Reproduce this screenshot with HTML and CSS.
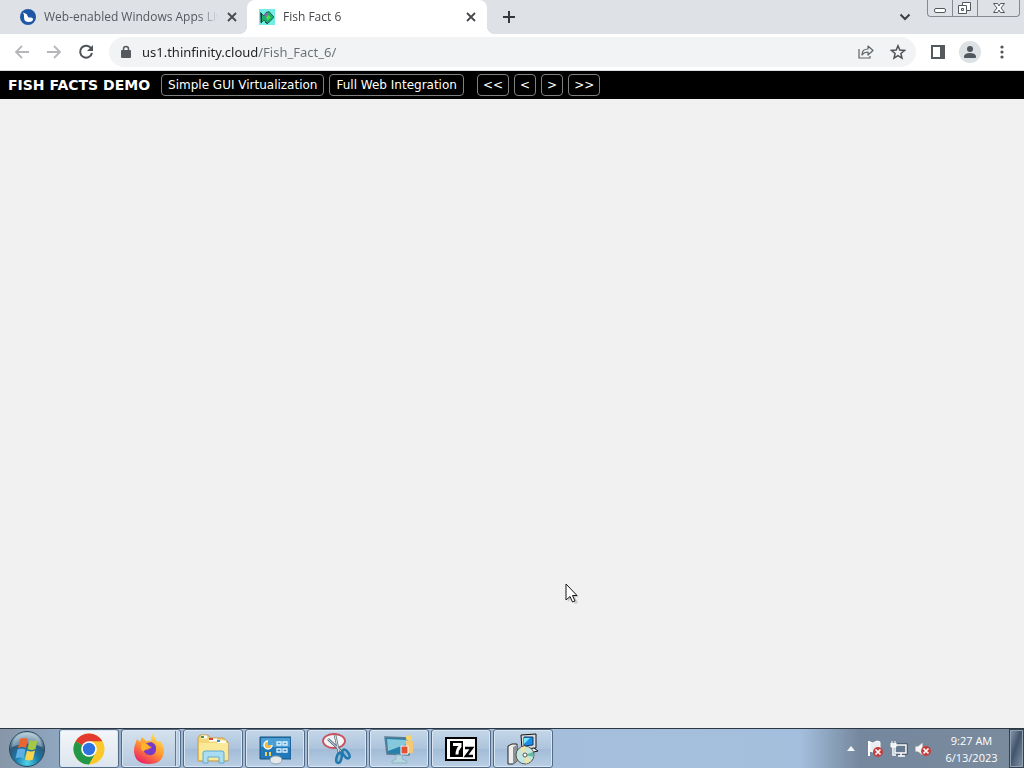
FILE: index.html
```
<!DOCTYPE html>
<html lang="en">
<head>
<meta charset="utf-8">
<title>Fish Fact 6</title>
<link rel="stylesheet" href="styles.css">
</head>
<body>
<header class="tabstrip">
  <div class="tab">
    <svg class="favicon" viewBox="0 0 16 16"><circle cx="8" cy="8" r="8" fill="#1d58a7"/><path d="M3 3.500L6.500 5l2 3.500h2.500q2.500.5 2 2.500-1 2-4 2-5 0-5-4.500V6z" fill="#fff"/></svg>
    <span class="tab-title">Web-enabled Windows Apps Live</span>
    <button class="tab-close" aria-label="Close tab"><svg viewBox="0 0 10 10"><path d="M1 1l8 8M9 1L1 9"/></svg></button>
  </div>
  <div class="tab tab-active">
    <svg class="favicon" viewBox="0 0 16 16"><path fill="#72eee5" d="M0 0h16v16H0z"/><path d="M1.500 3.500L5 7l2-3.500 3-1L13 6l2 2-4 4.500-3 2L5 11l-3 3z" fill="#1fae72" stroke="#174f42" stroke-width=".8"/><path d="M5 5l3-1 1 3-2 2z" fill="#9269b1"/><path d="M9 6l3 2-3 3-2-2z" fill="#48e349"/><path d="M2.500 4v10M6 13l3 2" stroke="#153943"/></svg>
    <span class="tab-title">Fish Fact 6</span>
    <button class="tab-close" aria-label="Close tab"><svg viewBox="0 0 10 10"><path d="M1 1l8 8M9 1L1 9"/></svg></button>
  </div>
  <button class="new-tab" aria-label="New tab"><svg viewBox="0 0 12 12"><path d="M6 0v12M0 6h12"/></svg></button>
  <button class="tab-search" aria-label="Search tabs"><svg viewBox="0 0 12 8"><path d="M1.500 1.500L6 6l4.500-4.500"/></svg></button>
  <div class="window-controls">
    <button aria-label="Minimize"><svg viewBox="0 0 24 16"><rect x="6.500" y="8.500" width="11" height="4" rx="1.500" fill="#fff" stroke="#54585e"/></svg></button>
    <button aria-label="Restore"><svg viewBox="0 0 24 16"><path d="M9.500 2.500h8v8h-8z" fill="#fff" stroke="#54585e"/><path d="M5.500 5.500h8v8h-8z" fill="#fff" stroke="#54585e"/><path d="M8.500 8.500h2v2h-2z" fill="#dee1e6" stroke="#54585e"/></svg></button>
    <button class="close-window" aria-label="Close"><svg viewBox="0 0 24 16"><path d="M6.500 3.500h4L12 6l1.500-2.500h4L14 8l3.500 4.500h-4L12 10l-1.500 2.500h-4L10 8z" fill="#fff" stroke="#54585e"/></svg></button>
  </div>
</header>
<nav class="toolbar" aria-label="Browser toolbar">
  <button class="tool" aria-label="Back"><svg viewBox="0 0 16 16"><path d="M15 8H2M8 2L2 8l6 6" fill="none" stroke="#b5b7ba" stroke-width="1.800"/></svg></button>
  <button class="tool" aria-label="Forward"><svg viewBox="0 0 16 16"><path d="M1 8h13M8 2l6 6-6 6" fill="none" stroke="#b5b7ba" stroke-width="1.800"/></svg></button>
  <button class="tool" aria-label="Reload"><svg viewBox="0 0 16 16"><path d="M13.300 4.600A6 6 0 1 0 14 9" fill="none" stroke="#4f5358" stroke-width="2"/><path d="M15 1v6H9z" fill="#4f5358"/></svg></button>
  <div class="omnibox">
    <svg class="lock" viewBox="0 0 10 14"><path d="M2.500 6V4a2.500 2.500 0 0 1 5 0v2" fill="none" stroke="#55585d" stroke-width="1.500"/><rect y="5" width="10" height="8" rx="1" fill="#55585d"/></svg>
    <input class="address" type="text" aria-label="Address" value="us1.thinfinity.cloud/Fish_Fact_6/">
    <button class="tool" aria-label="Share"><svg viewBox="0 0 16 16"><path d="M1 5v9h11v-2" fill="none" stroke="#5f6368" stroke-width="1.200"/><path d="M4 11q0-6 6-6V2l5 4.500-5 4.500V8Q6 8 4 11z" fill="none" stroke="#5f6368" stroke-width="1.200" stroke-linejoin="round"/></svg></button>
    <button class="tool" aria-label="Bookmark"><svg viewBox="0 0 16 16"><path d="M8 1.800l1.800 4.300 4.700.4-3.600 3 1.100 4.600L8 11.700l-4 2.400 1.100-4.600-3.600-3 4.700-.4z" fill="none" stroke="#505459" stroke-width="1.500"/></svg></button>
  </div>
  <button class="tool" aria-label="Side panel"><svg viewBox="0 0 16 16"><path d="M1 1h14v14H1z" fill="#55585d"/><path d="M3 3h7v10H3z" fill="#fff"/></svg></button>
  <button class="tool avatar" aria-label="Profile"><svg viewBox="0 0 16 16"><circle cx="8" cy="5" r="3" fill="#50565d"/><path d="M2 14v-2q1-3 6-3t6 3v2z" fill="#50565d"/></svg></button>
  <button class="tool" aria-label="Menu"><svg viewBox="0 0 16 16" fill="#505459"><circle cx="8" cy="3" r="1.600"/><circle cx="8" cy="8" r="1.600"/><circle cx="8" cy="13" r="1.600"/></svg></button>
</nav>
<div class="demo-bar">
  <h1 class="demo-title">FISH FACTS DEMO</h1>
  <button class="demo-button mode">Simple GUI Virtualization</button>
  <button class="demo-button mode">Full Web Integration</button>
  <div class="pager">
    <button class="demo-button">&lt;&lt;</button>
    <button class="demo-button">&lt;</button>
    <button class="demo-button">&gt;</button>
    <button class="demo-button">&gt;&gt;</button>
  </div>
</div>
<main class="content">
  <svg class="cursor" viewBox="0 0 14 22"><path d="M3 3v16l4-4 3 6 3-1-3-6h4z" fill="#aaa" opacity=".5"/><path d="M1 1v16l4-3.500L7.500 19l2.500-1-2.500-5.500H12z" fill="#fff" stroke="#161616"/></svg>
</main>
<footer class="taskbar">
  <button class="start" aria-label="Start">
    <svg viewBox="0 0 38 38"><defs><radialGradient id="orb" cx=".5" cy=".9" r=".85"><stop offset="0" stop-color="#4fd5ea"/><stop offset=".4" stop-color="#1a7aa9"/><stop offset=".7" stop-color="#2f5a7a"/><stop offset="1" stop-color="#a2bdcb"/></radialGradient></defs><circle cx="19" cy="19" r="17.500" fill="url(#orb)" stroke="#29475c"/><path d="M4 17Q6 3 19 3t15 14Q19 10 4 17z" fill="#d9e9ef" opacity=".4"/><path d="M12 9q4-2 8 0l-2 9q-4-2-8 0z" fill="#e96633"/><path d="M21.500 10q4 2 8 0l-2 9q-4 2-8 0z" fill="#a6c847"/><path d="M9.500 19.500q4-2 8 0l-2 9q-4-2-8 0z" fill="#5dafe4"/><path d="M19 20.500q4 2 8 0l-2 9q-4 2-8 0z" fill="#f8d34c"/></svg>
  </button>
  <div class="apps">
    <button class="app app-current" aria-label="Google Chrome"><svg viewBox="0 0 32 32"><circle cx="16" cy="16" r="15.500" fill="#fbc829"/><path d="M16 16L2.600 8.200A15.500 15.500 0 0 1 29.400 8.200H16z" fill="#e33b2e"/><path d="M2.600 8.200A15.500 15.500 0 0 0 16 31.500l6.500-11.700L16 16z" fill="#229747"/><circle cx="16" cy="16" r="7.800" fill="#fff"/><circle cx="16" cy="16" r="6.200" fill="#2c73e1"/></svg></button>
    <button class="app app-stacked" aria-label="Firefox"><svg viewBox="0 0 32 32"><defs><linearGradient id="flame" x1=".8" y1="0" x2=".2" y2="1"><stop offset="0" stop-color="#ffe64b"/><stop offset=".5" stop-color="#ff9332"/><stop offset="1" stop-color="#e91668"/></linearGradient></defs><path d="M2 12l2-6 3 3 2-5 4 4q3-1 5 0l1-7q4 4 5 8l3-1q4 5 4 10Q30 31 16 31 1 31 1 17q0-3 1-5z" fill="url(#flame)"/><path d="M10 12l4-2 4-1q6 2 5 8-1 6-7 5-5-1-6-6 3 2 6 0l3-2z" fill="#773bca"/><path d="M8 10q5-1 9 4-4 1-5 3-2 3-4-1z" fill="#ffb32b"/></svg></button>
    <button class="app" aria-label="File Explorer"><svg viewBox="0 0 32 32"><path d="M1 5l2-3h8l2 3h13l5 4v19H1z" fill="#f3d77d" stroke="#c99c43"/><path d="M4 4h6M12 7h8M20 9h9" stroke="#fff" stroke-width="3"/><path d="M4 4h3" stroke="#3d9b53" stroke-width="2"/><path d="M12 6h4" stroke="#d54734" stroke-width="2"/><path d="M20 8h3" stroke="#398cd0" stroke-width="2"/><path d="M2 10h29v17H2z" fill="#fbe997"/><path d="M6 30V20q0-2 2-2h17q2 0 2 2v10h-5v-6H11v6z" fill="#a8ddf3" stroke="#62abd0"/></svg></button>
    <button class="app" aria-label="Control Panel"><svg viewBox="0 0 32 32"><path d="M1 4h31v22H1z" fill="#2279b9" stroke="#175580"/><path d="M2 5h29v9H2z" fill="#4b9ed3"/><circle cx="9" cy="12" r="4" fill="#f5b74a" stroke="#f1f8fc" stroke-width="1.500"/><path d="M9 12V7a5 5 0 0 1 5 5z" fill="#43a1d9"/><path d="M18 9h4v3h-4zm6 0h4v3h-4zm-6 7h4v3h-4zm6 0h4v3h-4z" fill="none" stroke="#ddf1fc" stroke-width="1.300"/><path d="M7 19v4M11 19v4" stroke="#f1cf57" stroke-width="2"/><ellipse cx="17" cy="27" rx="6" ry="4" fill="#e5e7e9" stroke="#90a5b5"/></svg></button>
    <button class="app" aria-label="Snipping Tool"><svg viewBox="0 0 32 32"><ellipse cx="13" cy="8" rx="11" ry="7" fill="#f5f4f7" stroke="#c6535e" stroke-width="1.800"/><path d="M7 6l15 14M14 2l4 18" stroke="#596e7d" stroke-width="2.500"/><path d="M7 6l15 14M14 2l4 18" stroke="#dde9ed"/><ellipse cx="18" cy="25" rx="2.500" ry="5" transform="rotate(15 18 25)" fill="#8cb9d5" stroke="#2378ae" stroke-width="2.500"/><ellipse cx="25" cy="21" rx="2.500" ry="5" transform="rotate(-35 25 21)" fill="#8cb9d5" stroke="#2378ae" stroke-width="2.500"/></svg></button>
    <button class="app" aria-label="Remote desktop"><svg viewBox="0 0 32 32"><path d="M2 4l24 1v17L4 21z" fill="#277fac" stroke="#5d7e92" stroke-width="1.500"/><path d="M4 6l20 1v4L5 18z" fill="#85c8dc"/><path d="M13 22h6v4l5 2v2H9v-2l4-2z" fill="#b6d5df" stroke="#8db5c7"/><circle cx="26" cy="5" r="3" fill="#f9d56a"/><path d="M23 8h7v12h-7z" fill="#f5c879"/><path d="M18 13h7v8h-7z" fill="#e14f35" stroke="#fff"/></svg></button>
    <button class="app" aria-label="7-Zip"><svg viewBox="0 0 32 32"><path d="M1 5h30v22H1z" fill="#fff" stroke="#000" stroke-width="2"/><path d="M5 8h13v16H5z"/><path d="M8 11.500h7v2q-3 3-3 8" fill="none" stroke="#fff" stroke-width="3"/><path d="M20 15h7l-6 8h7" fill="none" stroke="#000" stroke-width="2.500"/></svg></button>
    <button class="app" aria-label="Installer"><svg viewBox="0 0 32 32"><path d="M14 2l15-1v14l-14 2z" fill="#ddd" stroke="#111"/><path d="M17 4h9v8l-9 1z" fill="#168ee9" stroke="#163666"/><path d="M17 5h6l-6 6z" fill="#76e5f5"/><path d="M14 17l13-2 4 3-13 3z" fill="#eee" stroke="#111"/><path d="M1 13l4-2h5v17l-4 3H1z" fill="#eee" stroke="#222"/><path d="M6 14v17l4-3V12z" fill="#8d9295"/><circle cx="18" cy="22" r="9" fill="#c5e6df" stroke="#555"/><path d="M18 22l-5-7 5-2zM18 22l6 6-5 3z" fill="#efe4a5"/><path d="M18 22l8-3 1 5z" fill="#65b99d"/><circle cx="18" cy="22" r="2" fill="#fff" stroke="#555"/></svg></button>
  </div>
  <div class="tray">
    <button class="tray-arrow" aria-label="Show hidden icons"><svg viewBox="0 0 8 5"><path d="M0 5l4-5 4 5z" fill="#f5f8fb"/></svg></button>
    <button class="tray-icon" aria-label="Action Center"><svg viewBox="0 0 18 18"><path d="M3 1v15" stroke="#fff" stroke-width="2"/><path d="M4 2q3 2 5 0t5 0v9q-3-2-5 0t-5 0z" fill="#e7edf0" stroke="#fff"/><circle cx="12" cy="12" r="5" fill="#c63d3d"/><path d="M9.500 9.500l5 5m0-5l-5 5" stroke="#fff" stroke-width="1.700"/></svg></button>
    <button class="tray-icon" aria-label="Network"><svg viewBox="0 0 18 18"><path d="M5 5h11v8H5z" fill="#718398" stroke="#303d48" stroke-width="3"/><path d="M5 5h11v8H5zM11 13v3M8 16h7M3 7v8h3" fill="#667a90" stroke="#fff" stroke-width="1.500"/><path d="M1 3v4h5V3M2 1v2M5 1v2" fill="#edf2f4" stroke="#fff"/></svg></button>
    <button class="tray-icon" aria-label="Volume"><svg viewBox="0 0 18 18"><path d="M1 6h3l5-4v14l-5-4H1z" fill="#f5f5f5" stroke="#808c94"/><circle cx="12" cy="11" r="5" fill="#c63d3d"/><path d="M9.500 8.500l5 5m0-5l-5 5" stroke="#fff" stroke-width="1.700"/></svg></button>
    <div class="clock"><span>9:27 AM</span><span>6/13/2023</span></div>
    <button class="show-desktop" aria-label="Show desktop"></button>
  </div>
</footer>
</body>
</html>
```
FILE: styles.css
```
* { box-sizing: border-box; }
body {
  margin: 0;
  min-height: 100vh;
  display: flex;
  flex-direction: column;
  font: 12px/16px "Open Sans", "Noto Sans", sans-serif;
  background: #f1f1f1;
}
button { font: inherit; padding: 0; border: 0; background: none; color: inherit; }
svg { display: block; flex: none; }

.tabstrip { display: flex; height: 34px; background: #dee1e6; color: #55595e; }
.tab {
  display: flex;
  align-items: center;
  flex: 0 1 240px;
  min-width: 0;
  gap: 8px;
  padding: 0 11px 0 12px;
}
.tab:first-child { flex-basis: 247px; padding-left: 20px; padding-right: 10px; }
.tab-active { position: relative; background: #fff; border-radius: 8px 8px 0 0; color: #45494d; }
.tab-active::before, .tab-active::after {
  content: "";
  position: absolute;
  bottom: 0;
  width: 8px;
  height: 8px;
}
.tab-active::before { left: -8px; background: radial-gradient(circle at 0 0, transparent 8px, #fff 8px); }
.tab-active::after { right: -8px; background: radial-gradient(circle at 100% 0, transparent 8px, #fff 8px); }
.favicon { width: 16px; height: 16px; }
.tab-title {
  flex: 1;
  overflow: hidden;
  white-space: nowrap;
  mask-image: linear-gradient(to right, #000 88%, transparent);
}
.tab-close { width: 10px; height: 10px; }
.tab-close svg { width: 10px; height: 10px; stroke: #45494d; stroke-width: 1.8; }
.new-tab { width: 44px; display: grid; place-items: center; }
.new-tab svg { width: 12px; height: 12px; stroke: #34383c; stroke-width: 2; }
.tab-search { width: 44px; margin-left: auto; display: grid; place-items: center; }
.tab-search svg { width: 12px; height: 8px; fill: none; stroke: #3c4043; stroke-width: 2; }
.window-controls {
  display: flex;
  height: 17px;
  margin-right: 4px;
  border: 1px solid #858a91;
  border-top: 0;
  border-radius: 0 0 4px 4px;
}
.window-controls button { width: 25px; display: grid; place-items: center; border-right: 1px solid #858a91; }
.window-controls .close-window { width: 41px; border-right: 0; }
.window-controls svg { width: 24px; height: 16px; }

.toolbar {
  display: flex;
  align-items: center;
  height: 37px;
  padding: 0 6px;
  background: #fff;
  border-bottom: 1px solid #dadce0;
}
.tool { width: 32px; height: 30px; display: grid; place-items: center; flex: none; }
.tool svg { width: 16px; height: 16px; }
.omnibox {
  display: flex;
  align-items: center;
  flex: 1;
  min-width: 0;
  height: 30px;
  margin: 0 6px 0 7px;
  padding: 0 2px 0 12px;
  border-radius: 15px;
  background: #f1f3f4;
}
.lock { width: 10px; height: 14px; }
.address {
  flex: 1;
  min-width: 0;
  margin-left: 11px;
  padding: 0;
  border: 0;
  outline: 0;
  font: 13px/20px "Noto Sans", "Open Sans", sans-serif;
  color: transparent;
  background: linear-gradient(to right, #202124 116px, #6b6f74 116px);
  background-clip: text;
  -webkit-background-clip: text;
}
.avatar svg { width: 22px; height: 22px; padding: 3px; border-radius: 50%; background: #dce1e5; }

.demo-bar {
  display: flex;
  align-items: center;
  gap: 5px;
  height: 28px;
  padding: 0 8px;
  background: #000;
  color: #fff;
}
.demo-title { margin: 0 6px 0 0; font: bold 14px/20px "DejaVu Sans", Verdana, sans-serif; white-space: nowrap; }
.demo-button {
  height: 22px;
  padding: 0 5px;
  border: 1px solid #808080;
  border-radius: 4px;
  font: 12px/20px "DejaVu Sans", Verdana, sans-serif;
  white-space: nowrap;
}
.mode { padding: 0 6px; }
.pager { display: flex; gap: 5px; margin-left: 8px; }

.content { position: relative; flex: 1; background: #f1f1f1; }
.cursor { position: absolute; left: 565px; top: 484px; width: 14px; height: 22px; }

.taskbar {
  display: flex;
  height: 40px;
  border-top: 1px solid #2c3641;
  background: linear-gradient(to right, #8796a8, #8fa6bf 56px, #a5bdd8 220px, #a4bfdd 800px, #74879d 860px, #7b8b9e);
}
.start { width: 58px; display: grid; place-items: center; padding-right: 4px; }
.start svg { width: 38px; height: 38px; }
.apps { display: flex; flex: 1; gap: 2px; min-width: 0; padding-left: 1px; }
.app {
  display: grid;
  place-items: center;
  width: 60px;
  height: 39px;
  border: 1px solid #526a83;
  border-radius: 3px;
  box-shadow: inset 0 0 0 1px #dae6f1;
  background: linear-gradient(#c5d7e9, #adc4dc 50%, #a1bbd7 51%, #b9cfe5);
}
.app svg { width: 32px; height: 32px; }
.app-current { background: linear-gradient(#f3f6f9, #dce5ee); }
.app-stacked {
  padding-right: 5px;
  background: linear-gradient(to right, transparent 53px, #62788f 53px, #62788f 54px, #d5e2ef 54px, #b1c8df 56px), linear-gradient(#d5e1ed, #b5c9df);
}
.tray { display: flex; align-items: center; color: #fff; }
.tray-arrow { width: 24px; height: 30px; display: grid; place-items: center; }
.tray-arrow svg { width: 8px; height: 5px; }
.tray-icon { width: 24px; height: 30px; display: grid; place-items: center; }
.tray-icon svg { width: 18px; height: 18px; }
.clock { display: flex; flex-direction: column; align-items: center; width: 73px; margin-right: 1px; font-size: 11px; line-height: 17px; }
.show-desktop {
  align-self: stretch;
  width: 15px;
  border: 1px solid #344252;
  box-shadow: inset 0 0 0 1px #91a0b0;
  background: linear-gradient(to bottom right, #8b9bab, #42556b 45%, #8496a9);
}
```
